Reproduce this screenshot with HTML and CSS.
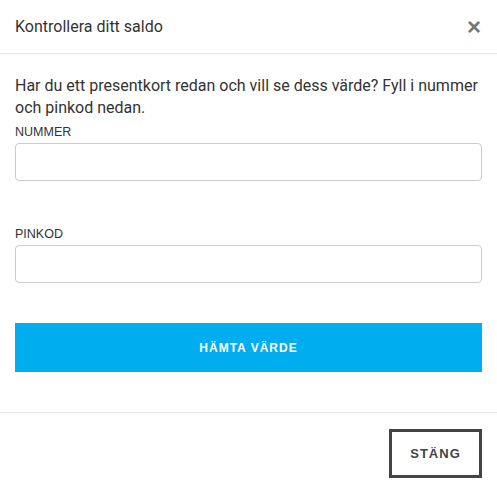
FILE: index.html
```html
<!DOCTYPE html>
<html lang="sv">
<head>
<meta charset="utf-8">
<link rel="stylesheet" href="styles.css">
</head>
<body>
<div class="modal">
  <div class="modal-header">
    <h4 class="title">Kontrollera ditt saldo</h4>
    <span class="close">&times;</span>
  </div>
  <div class="modal-body">
    <p class="intro">Har du ett presentkort redan och vill se dess värde? Fyll i nummer och pinkod nedan.</p>
    <div class="field">
      <label class="label">NUMMER</label>
      <input class="input" type="text">
    </div>
    <div class="field field-second">
      <label class="label">PINKOD</label>
      <input class="input" type="text">
    </div>
    <button class="primary">HÄMTA VÄRDE</button>
  </div>
  <div class="modal-footer">
    <button class="secondary">STÄNG</button>
  </div>
</div>
</body>
</html>
```
FILE: styles.css
```css
html, body { margin: 0; padding: 0; background: #fff; }
body { font-family: Roboto, "Liberation Sans", sans-serif; color: #333; }
.modal { width: 497px; }
.modal-header {
  height: 54px;
  border-bottom: 1px solid #e5e5e5;
  display: flex;
  align-items: center;
  justify-content: space-between;
  padding: 0 15px;
  box-sizing: border-box;
}
.title { margin: 0; font-size: 16px; font-weight: 400; color: #333; }
.close {
  font-family: "Liberation Sans", Arial, sans-serif;
  font-size: 24px; font-weight: 700; color: #777; line-height: 1; margin-right: 1px;
}
.modal-body { padding: 21px 15px 40px; }
.intro { margin: 0 0 6px; font-size: 16px; line-height: 22px; color: #333; }
.field { display: flex; flex-direction: column; }
.field-second { margin-top: 46px; }
.label {
  font-family: "Liberation Sans", Arial, sans-serif;
  font-size: 12.5px; line-height: 14px; color: #333; margin-bottom: 4px;
}
.input {
  height: 38px; box-sizing: border-box;
  border: 1px solid #ccc; border-radius: 4px;
  margin: 0; padding: 6px 12px; font-size: 14px;
}
.primary {
  display: block; width: 100%; margin-top: 40px; height: 49px;
  background: #00aeef; color: #fff; border: 0;
  font-family: "Liberation Sans", Arial, sans-serif; font-weight: 700;
  font-size: 12px; letter-spacing: 1px;
}
.modal-footer {
  border-top: 1px solid #e5e5e5;
  display: flex; justify-content: flex-end;
  padding: 16px 15px 0;
}
.secondary {
  width: 93px; height: 49px; box-sizing: border-box;
  background: #fff; border: 3px solid #444; color: #444;
  font-family: "Liberation Sans", Arial, sans-serif; font-weight: 700;
  font-size: 13px; letter-spacing: 1px;
}
```
